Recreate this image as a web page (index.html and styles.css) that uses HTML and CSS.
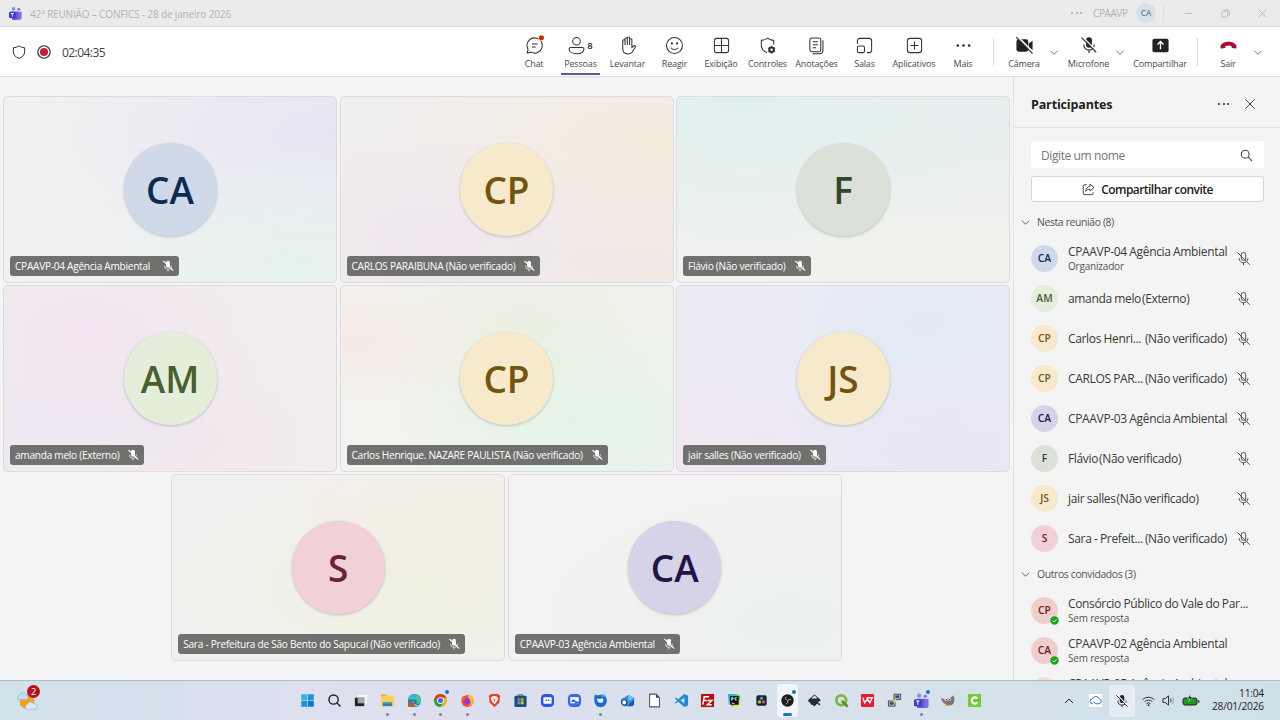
FILE: index.html
```html
<!DOCTYPE html>
<html lang="pt-BR">
<head>
  <meta charset="UTF-8">
  <meta name="viewport" content="width=device-width, initial-scale=1.0">
  <title>42ª REUNIÃO – CONFICS - 28 de janeiro 2026</title>
  <link rel="stylesheet" href="styles.css">
</head>
<body>
  <!-- shared icons -->
  <svg class="sprite" width="0" height="0">
    <symbol id="mic-off" viewBox="0 0 16 16">
      <rect x="5.6" y="1.6" width="4.8" height="8.4" rx="2.4"/>
      <path d="M3.4 7.6v.4a4.6 4.6 0 0 0 9.2 0v-.4M8 12.6v2.4M1.6 1.6l13 13"/>
    </symbol>
    <symbol id="mic-off-fill" viewBox="0 0 16 16">
      <rect x="5.4" y="1" width="5.2" height="9.4" rx="2.6" fill="currentColor" stroke="none"/>
      <path d="M3.4 7.6v.4a4.6 4.6 0 0 0 9.2 0v-.4M8 12.6v2.6"/>
      <path class="cut" d="M2.6 1l12.6 12.8"/>
      <path d="M1.4 1.4l13 13"/>
    </symbol>
    <symbol id="chevron" viewBox="0 0 10 10">
      <path d="M1 3l4 4 4-4"/>
    </symbol>
    <symbol id="teams" viewBox="0 0 16 16">
      <circle cx="5.5" cy="2.8" r="2.3" fill="#8b8cf0"/>
      <circle cx="12" cy="3.4" r="1.9" fill="#8a70e0"/>
      <path d="M9 6.5h6.500v5.500a3 3 0 0 1-6.500 2z" fill="#7e6be0"/>
      <path d="M3 6.200h8v6.600a4 4 0 0 1-8 1z" fill="#5b5fd6"/>
      <rect x="0" y="6.600" width="8.200" height="7.600" rx="1.200" fill="#3f3bbd"/>
      <path d="M2.200 8.600h3.800M4.100 8.600v4" stroke="#fff" stroke-width="1.100"/>
    </symbol>
  </svg>

  <div class="window">
    <header class="titlebar">
      <svg class="app-logo"><use href="#teams"/></svg>
      <span class="title">42ª REUNIÃO – CONFICS - 28 de janeiro 2026</span>
      <span class="title-dots"><i></i><i></i><i></i></span>
      <span class="tenant">CPAAVP</span>
      <span class="me">CA</span>
      <span class="title-sep"></span>
      <svg class="win-btn" viewBox="0 0 10 10"><path d="M1 5h8"/></svg>
      <svg class="win-btn" viewBox="0 0 10 10"><rect x="1" y="2.6" width="6.4" height="6.4" rx="1.4"/><path d="M3 1h4.4A1.8 1.8 0 0 1 9.2 2.8V7"/></svg>
      <svg class="win-btn" viewBox="0 0 10 10"><path d="M.8.8l8.4 8.4M9.2.8L.8 9.2"/></svg>
    </header>

    <nav class="toolbar">
      <div class="status">
        <svg class="shield" viewBox="0 0 14 14"><path d="M7 .8c1.6 1.3 3.4 1.8 5.6 1.900v4.100c0 3.200-2 5.300-5.600 6.500C3.400 12.100 1.400 10 1.400 6.800V2.700C3.600 2.600 5.400 2.100 7 .8z"/></svg>
        <svg class="rec" viewBox="0 0 14 14"><circle cx="7" cy="7" r="6.200" fill="none" stroke="#222" stroke-width="1.100"/><circle cx="7" cy="7" r="4.100" fill="#c4213c"/></svg>
        <span class="timer">02:04:35</span>
      </div>

      <div class="tool w46">
        <svg viewBox="0 0 20 20"><path d="M10.600 2a8 8 0 1 1-4.200 15L2.300 18l1-3.900A8 8 0 0 1 10.600 2z"/><path d="M7.300 8.500h6M7.300 11.500h4"/><circle cx="17.300" cy="1.900" r="3.400" fill="#fff" stroke="none"/><circle cx="17.300" cy="1.900" r="2.700" fill="#c4320f" stroke="none"/></svg>
        <span>Chat</span>
      </div>
      <div class="tool w47 active">
        <div class="tool-icon">
          <svg viewBox="0 0 20 20"><circle cx="10" cy="5.500" r="4"/><path d="M3.800 12h12.400a1.600 1.600 0 0 1 1.600 1.600c0 3-3.200 5-7.800 5s-7.800-2-7.800-5A1.600 1.600 0 0 1 3.800 12z"/></svg>
          <b>8</b>
        </div>
        <span>Pessoas</span>
      </div>
      <div class="tool w47">
        <svg viewBox="0 0 20 20"><path d="M5 11V5.200a1.200 1.200 0 0 1 2.400 0V9.500 3a1.200 1.200 0 0 1 2.400 0v6.500V2.300a1.200 1.200 0 0 1 2.400 0V9.500 4a1.200 1.200 0 0 1 2.400 0v8l2.400-1.700c1-.6 1.900.4 1.400 1.200l-3.500 5.300C13.800 18.300 12.400 19 10.500 19 7 19 5 16.500 5 13z"/></svg>
        <span>Levantar</span>
      </div>
      <div class="tool w47">
        <svg viewBox="0 0 20 20"><circle cx="10" cy="10" r="8.400"/><path d="M6.300 12.300c1.700 2.500 5.700 2.500 7.400 0"/><circle cx="7.300" cy="7.800" r="1.100" class="solid"/><circle cx="12.700" cy="7.800" r="1.100" class="solid"/></svg>
        <span>Reagir</span>
      </div>
      <div class="tool w46">
        <svg viewBox="0 0 20 20"><rect x="2.500" y="2.500" width="15" height="15" rx="2.500"/><path d="M10 2.500v15M2.500 10h15"/></svg>
        <span>Exibição</span>
      </div>
      <div class="tool w47">
        <svg viewBox="0 0 20 20"><path d="M16.500 9V4.600C13.800 4.400 12 3.700 10 2.200 8 3.700 6.200 4.400 3.500 4.600V9.500c0 4 2 6.400 6 7.900"/><circle cx="14.300" cy="14.500" r="2.500" stroke-width="2"/><path d="M14.300 10.600v7.800M10.900 12.500l6.800 4M17.700 12.500l-6.800 4" stroke-width="1.500"/><circle cx="14.300" cy="14.500" r="1.300" fill="#fff" stroke="none"/></svg>
        <span>Controles</span>
      </div>
      <div class="tool w51">
        <svg viewBox="0 0 20 20"><rect x="3" y="2" width="11.500" height="14.500" rx="2"/><path d="M6 6h5.500M6 9.200h5.500M6 12.400h3.500M16.800 4.500v10.700a3.500 3.500 0 0 1-3.500 3.500H6"/></svg>
        <span>Anotações</span>
      </div>
      <div class="tool w45">
        <svg viewBox="0 0 20 20"><path d="M2.500 8.500V5A2.500 2.500 0 0 1 5 2.500h10A2.500 2.500 0 0 1 17.500 5v10a2.500 2.500 0 0 1-2.500 2.500h-2.500"/><rect x="2.500" y="10.500" width="7.500" height="7" rx="1.800"/></svg>
        <span>Salas</span>
      </div>
      <div class="tool w54">
        <svg viewBox="0 0 20 20"><rect x="2.500" y="2.500" width="15" height="15" rx="2.800"/><path d="M10 5.800v8.400M5.800 10h8.400"/></svg>
        <span>Aplicativos</span>
      </div>
      <div class="tool w44">
        <svg viewBox="0 0 20 20"><g class="solid"><circle cx="4" cy="10" r="1.300"/><circle cx="10" cy="10" r="1.300"/><circle cx="16" cy="10" r="1.300"/></g></svg>
        <span>Mais</span>
      </div>

      <div class="divider"></div>

      <div class="tool w46">
        <svg viewBox="0 0 20 20"><rect x="1.500" y="3.500" width="12.500" height="13" rx="2.500" class="solid"/><path d="M14.500 8l4-3v10l-4-3z" class="solid"/><path d="M2.500.5l17 17" stroke="#fff" stroke-width="1.800"/><path d="M1.200 1.200l17.300 17.300" stroke-width="1.300"/></svg>
        <span>Câmera</span>
      </div>
      <svg class="caret"><use href="#chevron"/></svg>
      <div class="tool w49">
        <svg class="dark"><use href="#mic-off-fill"/></svg>
        <span>Microfone</span>
      </div>
      <svg class="caret"><use href="#chevron"/></svg>
      <div class="tool w58">
        <svg viewBox="0 0 20 20"><rect x="1.500" y="3" width="17" height="14" rx="2" class="solid"/><path d="M10 14V6M6.800 9L10 5.800 13.200 9" stroke="#fff" stroke-width="1.400"/></svg>
        <span>Compartilhar</span>
      </div>
      <div class="divider"></div>
      <div class="tool w46 leave">
        <svg viewBox="0 0 20 20"><path d="M10 6c5 0 8.300 2.300 8.500 5.300.1 1.600-.6 2-1.800 1.800l-2.200-.4c-1.200-.2-1.300-.8-1.400-2.300-2-.7-4.200-.7-6.200 0-.1 1.500-.2 2.100-1.400 2.300l-2.200.4c-1.200.2-1.900-.2-1.800-1.800C1.700 8.300 5 6 10 6z"/></svg>
        <span>Sair</span>
      </div>
      <svg class="caret"><use href="#chevron"/></svg>
    </nav>

    <main class="content">
      <section class="stage">
        <div class="tile t1">
          <div class="avatar blue">CA</div>
          <div class="name"><span>CPAAVP-04 Agência Ambiental</span><svg class="gap"><use href="#mic-off-fill"/></svg></div>
        </div>
        <div class="tile t2">
          <div class="avatar yellow">CP</div>
          <div class="name"><span>CARLOS PARAIBUNA (Não verificado)</span><svg><use href="#mic-off-fill"/></svg></div>
        </div>
        <div class="tile t3">
          <div class="avatar gray">F</div>
          <div class="name"><span>Flávio (Não verificado)</span><svg><use href="#mic-off-fill"/></svg></div>
        </div>
        <div class="tile t4">
          <div class="avatar green">AM</div>
          <div class="name"><span>amanda melo (Externo)</span><svg><use href="#mic-off-fill"/></svg></div>
        </div>
        <div class="tile t5">
          <div class="avatar yellow">CP</div>
          <div class="name"><span>Carlos Henrique. NAZARE PAULISTA (Não verificado)</span><svg><use href="#mic-off-fill"/></svg></div>
        </div>
        <div class="tile t6">
          <div class="avatar yellow">JS</div>
          <div class="name"><span>jair salles (Não verificado)</span><svg><use href="#mic-off-fill"/></svg></div>
        </div>
        <div class="tile t7">
          <div class="avatar pink">S</div>
          <div class="name"><span>Sara - Prefeitura de São Bento do Sapucaí (Não verificado)</span><svg><use href="#mic-off-fill"/></svg></div>
        </div>
        <div class="tile t8">
          <div class="avatar purple">CA</div>
          <div class="name"><span>CPAAVP-03 Agência Ambiental</span><svg><use href="#mic-off-fill"/></svg></div>
        </div>
      </section>

      <aside class="panel">
        <div class="panel-head">
          <h2>Participantes</h2>
          <span class="dots"><i></i><i></i><i></i></span>
          <svg class="close" viewBox="0 0 10 10"><path d="M.5.5l9 9M9.500.5l-9 9"/></svg>
        </div>
        <div class="search">
          <span>Digite um nome</span>
          <svg viewBox="0 0 14 14"><circle cx="5.600" cy="5.600" r="4.200"/><path d="M8.800 8.800l4.200 4.200"/></svg>
        </div>
        <div class="invite">
          <svg viewBox="0 0 14 14"><path d="M5 1.800H3.200A1.900 1.900 0 0 0 1.300 3.700v7a1.900 1.900 0 0 0 1.900 1.900h7a1.900 1.900 0 0 0 1.900-1.900V10"/><path d="M8.600 1.200l4.400 3.700-4.400 3.700V6.700C6.500 6.600 5.100 7.300 4 9c.2-3 1.900-5.100 4.600-5.500z"/></svg>
          <span>Compartilhar convite</span>
        </div>

        <div class="group"><svg><use href="#chevron"/></svg><span>Nesta reunião (8)</span></div>
        <div class="person">
          <div class="pic blue">CA</div>
          <div class="who"><p>CPAAVP-04 Agência Ambiental</p><small>Organizador</small></div>
          <svg class="mic"><use href="#mic-off"/></svg>
        </div>
        <div class="person">
          <div class="pic green">AM</div>
          <div class="who"><p>amanda melo <span>(Externo)</span></p></div>
          <svg class="mic"><use href="#mic-off"/></svg>
        </div>
        <div class="person">
          <div class="pic yellow">CP</div>
          <div class="who"><p class="split">Carlos Henri... <span>(Não verificado)</span></p></div>
          <svg class="mic"><use href="#mic-off"/></svg>
        </div>
        <div class="person">
          <div class="pic yellow">CP</div>
          <div class="who"><p class="split">CARLOS PAR... <span>(Não verificado)</span></p></div>
          <svg class="mic"><use href="#mic-off"/></svg>
        </div>
        <div class="person">
          <div class="pic purple">CA</div>
          <div class="who"><p>CPAAVP-03 Agência Ambiental</p></div>
          <svg class="mic"><use href="#mic-off"/></svg>
        </div>
        <div class="person">
          <div class="pic gray">F</div>
          <div class="who"><p>Flávio <span>(Não verificado)</span></p></div>
          <svg class="mic"><use href="#mic-off"/></svg>
        </div>
        <div class="person">
          <div class="pic yellow">JS</div>
          <div class="who"><p>jair salles <span>(Não verificado)</span></p></div>
          <svg class="mic"><use href="#mic-off"/></svg>
        </div>
        <div class="person">
          <div class="pic pink">S</div>
          <div class="who"><p class="split">Sara - Prefeit... <span>(Não verificado)</span></p></div>
          <svg class="mic"><use href="#mic-off"/></svg>
        </div>

        <div class="group"><svg><use href="#chevron"/></svg><span>Outros convidados (3)</span></div>
        <div class="person">
          <div class="pic red">CP<svg class="ok" viewBox="0 0 10 10"><circle cx="5" cy="5" r="4.700"/><path d="M3 5.200l1.400 1.400L7.200 3.800"/></svg></div>
          <div class="who"><p>Consórcio Público do Vale do Par...</p><small>Sem resposta</small></div>
        </div>
        <div class="person">
          <div class="pic red">CA<svg class="ok" viewBox="0 0 10 10"><circle cx="5" cy="5" r="4.700"/><path d="M3 5.200l1.400 1.400L7.200 3.800"/></svg></div>
          <div class="who"><p>CPAAVP-02 Agência Ambiental</p><small>Sem resposta</small></div>
        </div>
        <div class="person">
          <div class="pic peach">CA</div>
          <div class="who"><p>CPAAVP-05 Agência Ambiental</p><small>Sem resposta</small></div>
        </div>
      </aside>
    </main>
  </div>

  <footer class="taskbar">
    <div class="weather">
      <svg viewBox="0 0 24 24">
        <circle cx="11" cy="13" r="8" fill="#f5a11c"/>
        <path d="M1 10.500a3 3 0 0 1 1.500-5A4 4 0 0 1 9.500 5a2.800 2.800 0 0 1 .5 5.500z" fill="#c9dcf6" stroke="#7f9fd8" stroke-width=".6"/>
        <path d="M10.500 21a3 3 0 0 1 .8-5.500 4 4 0 0 1 7.200-.5A3 3 0 0 1 19.500 21z" fill="#dbe8fa" stroke="#8aa8da" stroke-width=".6"/>
      </svg>
      <b>2</b>
    </div>

    <div class="apps">
      <div class="app"><svg viewBox="0 0 16 16"><g fill="#1f93dc"><rect x="1.300" y="1.300" width="6.400" height="6.400" fill="#3fb0e8"/><rect x="8.300" y="1.300" width="6.400" height="6.400"/><rect x="1.300" y="8.300" width="6.400" height="6.400"/><rect x="8.300" y="8.300" width="6.400" height="6.400" fill="#0f7acb"/></g></svg></div>
      <div class="app"><svg viewBox="0 0 16 16" fill="none" stroke="#222" stroke-width="1.500"><circle cx="7" cy="7" r="4.900"/><path d="M10.500 10.500l3.900 3.900"/></svg></div>
      <div class="app"><svg viewBox="0 0 16 16"><rect x="5" y="2" width="10" height="9" fill="#f7f7f7"/><path d="M2 5h10v9H2z" fill="#222"/><path d="M5 5h7v6H5z" fill="#aaa"/></svg></div>
      <div class="app run"><svg viewBox="0 0 16 16"><path d="M1 1.500h5l1.500 1.800H1z" fill="#e0a21c"/><rect x="1" y="3" width="14" height="11" rx=".8" fill="#fbd058"/><path d="M3 10h10v4H3z" fill="#2b7fa8"/><path d="M4.500 9.500h7v2h-7z" fill="#3fa5c8"/></svg></div>
      <div class="app run"><svg viewBox="0 0 16 16"><circle cx="8" cy="8" r="7" fill="#1581c9"/><path d="M1.200 7A7 7 0 0 1 15 8c0 3-2.600 4-5 3 1.500-2 .5-4-2-4-3 0-5.500 0-6.800 0z" fill="#45c98f"/><path d="M1.200 7A7 7 0 0 1 12 2.200C9 5 4 4 1.200 7z" fill="#35b8dc"/><path d="M7 7.500c-1 3 1 5.500 5.500 5.500A7 7 0 0 1 5 11.500z" fill="#e9f4fa"/><rect x="1" y="9.800" width="7" height="5" rx="1" fill="#a8642c"/></svg></div>
      <div class="app run"><svg viewBox="0 0 16 16"><circle cx="8" cy="8" r="7" fill="#e8b91c"/><path d="M2 4.400A7 7 0 0 1 14.300 5H8L5 9.500z" fill="#db3b2c"/><path d="M2 4.400A7 7 0 0 0 8 15l3-5.200-6-.2z" fill="#2c9c4b"/><circle cx="8" cy="8" r="3.600" fill="#fff"/><circle cx="8" cy="8" r="2.700" fill="#2d72de"/></svg><em></em></div>
      <div class="app run"><svg viewBox="0 0 16 16"><circle cx="8" cy="8.500" r="6.500" fill="#f0483e"/><path d="M9 1c3 1 5.500 4 5.500 7.500A6 6 0 0 1 8 14c4-1 4-5 2-7-1-1.500-2-3-1-6z" fill="#fbc02d"/><circle cx="7.500" cy="8.500" r="3.300" fill="#8a3fc8"/><path d="M1.500 8c0-3 1-4 2-5 .3 1.500 1.500 2 3.500 2-2 1-2 2-2.500 3z" fill="#f26a2a"/></svg></div>
      <div class="app"><svg viewBox="0 0 16 16"><path d="M4.500 1h7l2.500 2-.8 7L8 15.200 2.800 10 2 3z" fill="#e8412a"/><path d="M5 4l3-.7L11 4l1 2-1.500 3L8 12 5.500 9 4 6z" fill="#fff"/><path d="M6 6l1 .7M10 6l-1 .7M8 6.500v3" stroke="#e8412a" stroke-width=".9"/></svg></div>
      <div class="app"><svg viewBox="0 0 16 16"><path d="M5.500 4V2h5v2" fill="none" stroke="#17609c"/><rect x="1.500" y="3" width="13" height="12" rx="1.500" fill="#184f82"/><path d="M4.800 5.500h3v3h-3z" fill="#ef5a3c"/><path d="M8.300 5.500h3v3h-3z" fill="#7fbb42"/><path d="M4.800 9h3v3h-3z" fill="#35a8e0"/><path d="M8.300 9h3v3h-3z" fill="#f6bf26"/></svg></div>
      <div class="app"><svg viewBox="0 0 16 16"><rect x="1" y="1" width="14" height="14" rx="4.500" fill="#2f55e0"/><rect x="3.600" y="4.500" width="8.800" height="7" rx="1" fill="#fff"/><path d="M6 7h1.500v1.500H6zM8.500 7H10v1.500H8.500z" fill="#2f55e0"/></svg></div>
      <div class="app"><svg viewBox="0 0 16 16"><rect x="1" y="1" width="14" height="14" rx="4.500" fill="#3b6be4"/><path d="M3.500 4.500h9v6.500h-9z" fill="#fff"/><path d="M4.800 9.500a2.200 2.200 0 0 1 4.400 0M8.500 11a2 2 0 0 1 4 0z" fill="#3b6be4" stroke="#3b6be4" stroke-width=".8"/></svg></div>
      <div class="app run"><svg viewBox="0 0 16 16"><path d="M2 1c1.500 2 3 1.500 4.500 1C11 .8 15 4 14.800 8.500A6.500 6.500 0 0 1 1.500 8.500C1.200 5 1.500 3 2 1z" fill="#1c6fc4"/><path d="M4.500 5.500C6 7 8 6 10.500 5.500 11.500 8 11 10.500 8.500 10.500s-4.500-2-4-5z" fill="#e6f2fc"/><path d="M9 1c3.500 0 5.500 2.500 5.500 5-1-2-3-2.500-5.500-2z" fill="#42b4f0"/></svg></div>
      <div class="app"><svg viewBox="0 0 16 16"><path d="M1 7l8-5 6 3v7l-6 2H4z" fill="#2a8fe0"/><path d="M9 2l6 3-6 4z" fill="#75c6f5"/><path d="M8 14l7-7v5.500L13 14z" fill="#1b4fb0"/><circle cx="4.500" cy="10" r="2.800" fill="#fff" stroke="#174a94" stroke-width="1.300"/></svg></div>
      <div class="app"><svg viewBox="0 0 16 16"><path d="M2.800 1.200h7L13.300 5v9.800H2.800z" fill="#fff" stroke="#555" stroke-width="1.100"/><path d="M9.500 1.200V5h3.800z" fill="#444"/></svg></div>
      <div class="app"><svg viewBox="0 0 16 16"><path d="M11 1l4 1.800v10.400L11 15 4.500 9.300 2 11.200 1 10.500l2.300-2.500L1 5.500l1-.7 2.500 1.900z" fill="#2489cf"/><path d="M11 4.800v6.400L7 8z" fill="#dbe1ee"/></svg></div>
      <div class="app"><svg viewBox="0 0 16 16"><rect x="1" y="1" width="14" height="14" fill="#b01414"/><path d="M3 12.500L4.500 4h5.200M3.800 8h4M8.500 8h4.200l-5 4.500h4.800" fill="none" stroke="#fff" stroke-width="1.500"/></svg></div>
      <div class="app"><svg viewBox="0 0 16 16"><path d="M1 1h9l4 2v7l-4 4H5z" fill="#2fd38c"/><path d="M12 6l3 3-3 6H6z" fill="#f3ea4a"/><path d="M1 1h6L2 13z" fill="#24b6d8"/><rect x="3.300" y="3.300" width="9.200" height="9.200" fill="#111"/><path d="M5 8V5h1.500v1.500H5M10.500 5H8.700v2.500h1.800M5 11h3" fill="none" stroke="#fff" stroke-width=".9"/></svg></div>
      <div class="app"><svg viewBox="0 0 16 16"><rect x="2.500" y="2.500" width="11" height="11" rx="2" fill="#1c2330"/><circle cx="8" cy="5.700" r="1.800" fill="#36a0d8"/><circle cx="5.900" cy="9.500" r="1.800" fill="#a8cf46"/><circle cx="10.100" cy="9.500" r="1.800" fill="#e0504c"/></svg></div>
      <div class="app focus"><svg viewBox="0 0 16 16"><circle cx="8" cy="8" r="6.600" fill="#1d1d20"/><path d="M6.500 4c-1.500 1.700 0 3.400 1.500 3.800M11.800 7.200c-2-1-3.500.5-3.500 1.500M6 11.800c2-.5 2.700-2 2-3.800" fill="none" stroke="#b8b8bc"/></svg><em></em></div>
      <div class="app"><svg viewBox="0 0 16 16"><path d="M8 1.500l6.500 5.800c.8 1.200-2 1.700-2.500 2.700 1 .7 0 1.700-1.700 1.700L8 14.500l-2.300-2C3 12.500 4.500 11 3 10 1.500 9.500.7 8.300 1.500 7.300z" fill="#2a2c33"/><path d="M8 2.600l3 2.800-2 .8-1.200-.8L6 6.300l-1-.9z" fill="#e4e6ea"/><circle cx="13" cy="12" r="1.100" fill="#2a2c33"/></svg></div>
      <div class="app"><svg viewBox="0 0 16 16"><circle cx="7.700" cy="7.700" r="5.200" fill="none" stroke="#7ab648" stroke-width="2.900"/><path d="M8.500 8.500l6 6" stroke="#4c8f2c" stroke-width="2.800"/><path d="M7 7h3.500L7 10z" fill="#f0c03a"/></svg></div>
      <div class="app"><svg viewBox="0 0 16 16"><rect x="1" y="1" width="14" height="14" rx="1.500" fill="#e01e37"/><path d="M3 5l2 5.500 3-4 2.500 4L13 5H7" fill="none" stroke="#fff" stroke-width="1.500"/></svg></div>
      <div class="app"><svg viewBox="0 0 16 16"><rect x="7.500" y="1.300" width="7" height="5.500" fill="#bfc6d4" stroke="#444"/><rect x="9" y="2.600" width="4" height="2.700" fill="#2c3c98"/><rect x="1.500" y="8.500" width="7" height="5.500" fill="#bfc6d4" stroke="#444"/><rect x="3" y="9.800" width="4" height="2.700" fill="#2c3c98"/><path d="M5.500 8.500l4-2.500v2l3-.5-5 3.500.5-2z" fill="#f5e03a"/></svg></div>
      <div class="app run"><svg><use href="#teams"/></svg><em></em></div>
      <div class="app"><svg viewBox="0 0 16 16"><path d="M.8 5c2 1.500 4 1.500 6 1 2.500-.5 5 0 7.500-3.500 1.200 3 1.500 6 .2 8.500-2 3-7.500 3-9 .5C3 10.500 1.800 8 .8 5z" fill="#7d766c"/><circle cx="6.500" cy="7" r="1.600" fill="#fff"/><circle cx="10" cy="7" r="1.500" fill="#fff"/><circle cx="6.700" cy="7.200" r=".7"/><circle cx="9.900" cy="7.200" r=".7"/><path d="M3 13.500l8-1.500 1 1.300z" fill="#d98a3a"/></svg></div>
      <div class="app"><svg viewBox="0 0 16 16"><rect x="1" y="1" width="14" height="14" rx="1" fill="#76c83c"/><path d="M11 6A3.300 3.300 0 1 0 11 10" fill="none" stroke="#fff" stroke-width="2.300"/></svg></div>
    </div>

    <div class="tray">
      <svg class="up" viewBox="0 0 10 10"><path d="M1 7l4-4 4 4"/></svg>
      <div class="cloud"><svg viewBox="0 0 14 14"><path d="M4 10.500a2.600 2.600 0 0 1-.3-5.200 3.700 3.700 0 0 1 7-.3 2.800 2.800 0 0 1 .3 5.500H7L5 8"/></svg></div>
      <div class="tray-mic"><svg><use href="#mic-off-fill"/></svg></div>
      <svg class="wifi" viewBox="0 0 14 14"><path d="M.8 5.400a9 9 0 0 1 12.400 0M2.900 7.700a6 6 0 0 1 8.200 0M4.900 9.900a3 3 0 0 1 4.200 0"/><circle cx="7" cy="11.500" r="1"/></svg>
      <svg class="vol" viewBox="0 0 14 14"><path d="M1 5v4h2.300L7 12V2L3.300 5z"/><path d="M9 5a3 3 0 0 1 0 4"/><path d="M10.800 3.200a5.500 5.500 0 0 1 0 7.600" opacity=".35"/></svg>
      <svg class="battery" viewBox="0 0 18 14"><rect x="1" y="4" width="14" height="7" rx="2" fill="#1c9a22" stroke="#222"/><path d="M16.700 6.300v2.500" stroke="#222" stroke-width="1.200"/><path class="bolt" d="M8.500 0L5.500 4.500h2L7 7.500l4-4.500H8.500z"/></svg>
      <div class="clock"><span>11:04</span><span>28/01/2026</span></div>
    </div>
  </footer>
</body>
</html>
```
FILE: styles.css
```css
* {
  box-sizing: border-box;
  margin: 0;
  padding: 0;
}

body {
  width: 1280px;
  height: 720px;
  overflow: hidden;
  display: flex;
  flex-direction: column;
  background: #f4f4f4;
  color: #3a3a3a;
  font-family: 'Open Sans', 'Noto Sans', sans-serif;
}

svg {
  display: block;
  flex: none;
}

.sprite {
  position: absolute;
}

.window {
  height: 680px;
  display: flex;
  flex-direction: column;
  overflow: hidden;
}

/* title bar */
.titlebar {
  height: 27px;
  flex: none;
  display: flex;
  align-items: center;
  padding: 0 13px 0 9px;
  background: #ebebeb;
  border-bottom: 1px solid #e2e2e2;
  color: #b3b3b3;
}

.app-logo {
  width: 13px;
  height: 14px;
}

.title {
  margin-left: 8px;
  padding-top: 1px;
  flex: 1;
  font-size: 10px;
  letter-spacing: -0.15px;
}

.title-dots, .dots {
  display: flex;
  gap: 2.7px;
}

.title-dots i, .dots i {
  width: 1.8px;
  height: 1.8px;
  border-radius: 50%;
  background: #aaa;
}

.tenant {
  margin-left: 11px;
  width: 36px;
  font-size: 10px;
  letter-spacing: -0.4px;
}

.me {
  margin-left: 7px;
  width: 20px;
  height: 20px;
  border-radius: 50%;
  background: #d8e1ea;
  color: #6f8090;
  font-size: 8px;
  font-weight: 600;
  line-height: 20px;
  text-align: center;
}

.title-sep {
  width: 1px;
  height: 20px;
  margin: 0 20px 0 7px;
  background: #e0e0e0;
}

.win-btn {
  width: 9px;
  height: 9px;
  margin-right: 28px;
  fill: none;
  stroke: #b5b5b5;
}

.win-btn:last-child {
  margin-right: 0;
}

/* toolbar */
.toolbar {
  height: 50px;
  flex: none;
  display: flex;
  background: #fff;
  border-bottom: 1px solid #e0e0e0;
}

.status {
  width: 511px;
  display: flex;
  align-items: center;
  padding-left: 12px;
}

.shield {
  width: 14px;
  height: 14px;
  fill: none;
  stroke: #333;
}

.rec {
  width: 14px;
  height: 14px;
  margin-left: 11px;
}

.timer {
  margin-left: 11px;
  padding-top: 1px;
  font-size: 12px;
  letter-spacing: -0.55px;
  color: #444;
}

.tool {
  flex: none;
  height: 49px;
  padding-top: 9px;
  display: flex;
  flex-direction: column;
  align-items: center;
  font-size: 9px;
  color: #4a4a4a;
  white-space: nowrap;
}

.tool span {
  margin-top: 2px;
  line-height: 14px;
  letter-spacing: -0.17px;
}

.tool svg {
  width: 19px;
  height: 19px;
  overflow: visible;
  fill: none;
  stroke: #333;
  stroke-width: 1.1;
}

.tool .solid {
  fill: #222;
  stroke: none;
}

.w44 { width: 44px; }
.w45 { width: 45px; }
.w46 { width: 46px; }
.w47 { width: 47px; }
.w49 { width: 49px; margin-left: 3px; }
.w51 { width: 51px; }
.w54 { width: 54px; }
.w58 { width: 58px; margin-left: 4px; }

.tool-icon {
  display: flex;
  align-items: center;
  margin-left: -1px;
}

.tool-icon b {
  margin-left: 1px;
  font-size: 9.5px;
  line-height: 12px;
  font-weight: 600;
  color: #222;
}

.active span {
  width: 39px;
  height: 18px;
  text-align: center;
  border-bottom: 2px solid #5b57a8;
}

.tool .dark {
  width: 18px;
  height: 18px;
  margin-bottom: 1px;
  color: #222;
}

.cut {
  stroke: #fff;
  stroke-width: 1.2;
}

.divider {
  width: 1px;
  height: 28px;
  margin: 11px 7px 0 8px;
  background: #dcdcdc;
}

.caret {
  width: 14px;
  height: 9px;
  margin-top: 21px;
  fill: none;
  stroke: #555;
  stroke-width: 0.9;
}

.tool.leave svg {
  fill: #a80f2b;
  stroke: none;
}

/* stage */
.content {
  flex: 1;
  min-height: 0;
  display: flex;
}

.stage {
  width: 1013px;
  padding: 19px 0 0;
  display: flex;
  flex-wrap: wrap;
  justify-content: center;
  align-content: flex-start;
  gap: 2.5px;
}

.tile {
  position: relative;
  width: 334px;
  height: 186.5px;
  display: flex;
  align-items: center;
  justify-content: center;
  border: 1px solid #dcdbe0;
  border-radius: 5px;
}

.avatar {
  width: 93px;
  height: 93px;
  border-radius: 50%;
  font-size: 37px;
  font-weight: 600;
  line-height: 94px;
  text-align: center;
  box-shadow: 0 1px 3px rgba(0,0,0,0.2);
}

.blue { background: #cfd9ea; color: #0d2b50; }
.yellow { background: #f6e9cc; color: #73540f; }
.gray { background: #dbe1d8; color: #34472c; }
.green { background: #e4eedb; color: #48602f; }
.pink { background: #f1d0d7; color: #692334; }
.purple { background: #d6d2e8; color: #211446; }
.red { background: #efcfcc; color: #6b1c18; }
.peach { background: #f6e0cd; color: #7a4310; }

.name {
  position: absolute;
  left: 6px;
  bottom: 5.5px;
  height: 20px;
  display: flex;
  align-items: center;
  padding: 0 5px;
  border-radius: 3px;
  background: #70716f;
  color: #fff;
  font-size: 10.1px;
  letter-spacing: -0.26px;
  white-space: nowrap;
}

.name svg {
  width: 12px;
  height: 12px;
  margin-left: 8px;
  color: #fff;
  fill: none;
  stroke: #fff;
}

.name .gap {
  margin-left: 12px;
}

.name .cut {
  stroke: #70716f;
}

.t1 {
  background:
    radial-gradient(ellipse at 85% 95%, #e5f2ef 0%, transparent 55%),
    radial-gradient(ellipse at 100% 20%, #e6e5f3 0%, transparent 70%),
    #f2f1f1;
}

.t2 {
  background:
    radial-gradient(ellipse at 25% 75%, #efe6ee 0%, transparent 55%),
    radial-gradient(ellipse at 95% 25%, #f4ecdd 0%, transparent 60%),
    radial-gradient(ellipse at 90% 90%, #f0e8e4 0%, transparent 50%),
    #f1eeee;
}

.t3 {
  background:
    radial-gradient(ellipse at 20% 0%, #def0f0 0%, transparent 70%),
    radial-gradient(ellipse at 90% 10%, #e5efef 0%, transparent 55%),
    #f2f1ed;
}

.t4 {
  background:
    radial-gradient(ellipse at 25% 25%, #f2e4f0 0%, transparent 55%),
    radial-gradient(ellipse at 15% 75%, #ede6f3 0%, transparent 50%),
    radial-gradient(ellipse at 60% 85%, #f2e7ec 0%, transparent 50%),
    #f2eeee;
}

.t5 {
  background:
    radial-gradient(ellipse at 75% 75%, #e3f4e8 0%, transparent 55%),
    radial-gradient(ellipse at 0% 30%, #f6eae5 0%, transparent 35%),
    radial-gradient(ellipse at 55% 25%, #ebf0e2 0%, transparent 65%),
    #f2f2ef;
}

.t6 {
  background:
    radial-gradient(ellipse at 75% 20%, #e1ebf5 0%, transparent 55%),
    radial-gradient(ellipse at 5% 95%, #f1e6f0 0%, transparent 35%),
    radial-gradient(ellipse at 80% 90%, #e8e6f3 0%, transparent 60%),
    #eeebf5;
}

.t7 {
  background:
    radial-gradient(ellipse at 75% 60%, #f0f0e0 0%, transparent 70%),
    radial-gradient(ellipse at 90% 20%, #f4ede3 0%, transparent 45%),
    #f2f0ee;
}

.t8 {
  background:
    radial-gradient(ellipse at 85% 80%, #ebf1ee 0%, transparent 65%),
    #f3f1f1;
}

/* participants panel */
.panel {
  width: 267px;
  overflow: hidden;
  border-left: 1px solid #e2e2e2;
}

.panel-head {
  height: 51px;
  display: flex;
  align-items: center;
  padding: 4px 25px 0 17px;
  border-bottom: 1px solid #e2e2e2;
}

.panel-head h2 {
  flex: 1;
  font-size: 12.5px;
  font-weight: 700;
  letter-spacing: -0.15px;
  color: #222;
}

.dots i {
  background: #333;
}

.close {
  width: 10px;
  height: 10px;
  margin-left: 16px;
  fill: none;
  stroke: #444;
}

.search, .invite {
  width: 233px;
  margin-left: 17px;
  display: flex;
  align-items: center;
  background: #fff;
  border-radius: 3px;
}

.search {
  height: 27px;
  margin-top: 13px;
  padding: 1px 11px 0 10px;
  justify-content: space-between;
  color: #757575;
  font-size: 12px;
  letter-spacing: -0.4px;
}

.search svg {
  width: 13px;
  height: 13px;
  fill: none;
  stroke: #444;
  stroke-width: 1.2;
}

.invite {
  height: 26px;
  margin-top: 8px;
  padding-top: 1px;
  justify-content: center;
  gap: 6px;
  border: 1px solid #d6d6d6;
  color: #222;
  font-size: 12px;
  font-weight: 600;
  letter-spacing: -0.55px;
}

.invite svg {
  width: 13px;
  height: 13px;
  fill: none;
  stroke: #333;
}

.group {
  height: 20px;
  margin: 10px 0 6px;
  display: flex;
  align-items: center;
  padding-left: 7px;
  font-size: 10.4px;
  letter-spacing: -0.36px;
  color: #555;
}

.person + .group {
  margin: 6px 0;
}

.group svg {
  width: 9px;
  height: 9px;
  margin-right: 7px;
  fill: none;
  stroke: #555;
}

.person {
  height: 40px;
  display: flex;
  align-items: center;
  padding-left: 17px;
}

.pic {
  position: relative;
  width: 27px;
  height: 27px;
  flex: none;
  border-radius: 50%;
  font-size: 10.3px;
  font-weight: 600;
  line-height: 27px;
  text-align: center;
}

.ok {
  position: absolute;
  right: -1px;
  bottom: -1px;
  width: 9px;
  height: 9px;
  fill: #1aa51e;
  stroke: #fff;
}

.ok circle {
  stroke: none;
}

.who {
  width: 159px;
  margin-left: 10px;
  white-space: nowrap;
}

.who p {
  font-size: 12px;
  line-height: 17px;
  letter-spacing: -0.34px;
  word-spacing: -0.3px;
}

.who p span {
  margin-left: -1.5px;
}

.who .split {
  display: flex;
  justify-content: space-between;
}

.who small {
  display: block;
  margin-bottom: 2px;
  font-size: 10px;
  line-height: 12px;
  letter-spacing: -0.2px;
  color: #555;
}

.mic {
  width: 15px;
  height: 15px;
  margin-left: 9px;
  fill: none;
  stroke: #444;
}

/* taskbar */
.taskbar {
  height: 40px;
  display: flex;
  align-items: center;
  background: linear-gradient(90deg, #d2e1ea 0%, #d5e0eb 12%, #dfe0ef 25%, #dcdfed 42%, #d8e1ec 58%, #d5e2ea 78%, #cfe0e9 100%);
  border-top: 1px solid #b4bcc4;
}

.weather {
  position: relative;
  width: 277px;
  margin-left: 17px;
}

.weather svg {
  width: 22px;
  height: 22px;
}

.weather b {
  position: absolute;
  left: 10px;
  top: -5px;
  width: 13px;
  height: 13px;
  border-radius: 50%;
  background: #b3141e;
  color: #fff;
  font-size: 9px;
  font-weight: 400;
  line-height: 13px;
  text-align: center;
}

.apps {
  width: 694px;
  display: grid;
  grid-template-columns: repeat(26, 1fr);
}

.app {
  position: relative;
  height: 33px;
  display: flex;
  align-items: center;
  justify-content: center;
}

.app svg {
  width: 15px;
  height: 15px;
}

.run::after, .focus::after {
  content: '';
  position: absolute;
  bottom: 1px;
  width: 3px;
  height: 3px;
  border-radius: 2px;
  background: #7c828c;
}

.focus {
  margin: 0 3px;
  background: #f1f4f9;
  border-radius: 3px;
}

.focus::after {
  width: 9px;
  background: #1877b8;
}

.app em {
  position: absolute;
  right: 5px;
  top: 6px;
  width: 4px;
  height: 4px;
  border-radius: 50%;
  background: #1276c8;
}

.focus em {
  right: 2px;
}

.tray {
  flex: 1;
  display: flex;
  align-items: center;
  padding: 0 16px 0 76px;
}

.tray svg {
  fill: none;
  stroke: #222;
}

.up {
  width: 10px;
  height: 10px;
}

.cloud {
  width: 13px;
  height: 13px;
  margin: 0 7px 0 15px;
  background: #fff;
}

.tray .cloud svg {
  width: 13px;
  height: 13px;
  stroke: #2a66c0;
}

.tray-mic {
  width: 26px;
  height: 32px;
  display: flex;
  align-items: center;
  justify-content: center;
  border-radius: 3px;
  background: #e6ecf4;
}

.tray-mic svg {
  width: 14px;
  height: 14px;
  color: #222;
}

.wifi {
  width: 13px;
  height: 14px;
  margin-left: 7px;
}

.wifi circle {
  fill: #222;
  stroke: none;
}

.vol {
  width: 13px;
  height: 13px;
  margin-left: 7px;
}

.battery {
  width: 18px;
  height: 14px;
  margin-left: 7px;
}

.battery .bolt {
  fill: #222;
  stroke: #d3e1ea;
  stroke-width: 0.6;
}

.clock {
  flex: 1;
  display: flex;
  flex-direction: column;
  align-items: flex-end;
  padding-bottom: 1px;
  font-size: 10.2px;
  line-height: 13px;
  letter-spacing: -0.2px;
  color: #222;
}
```
